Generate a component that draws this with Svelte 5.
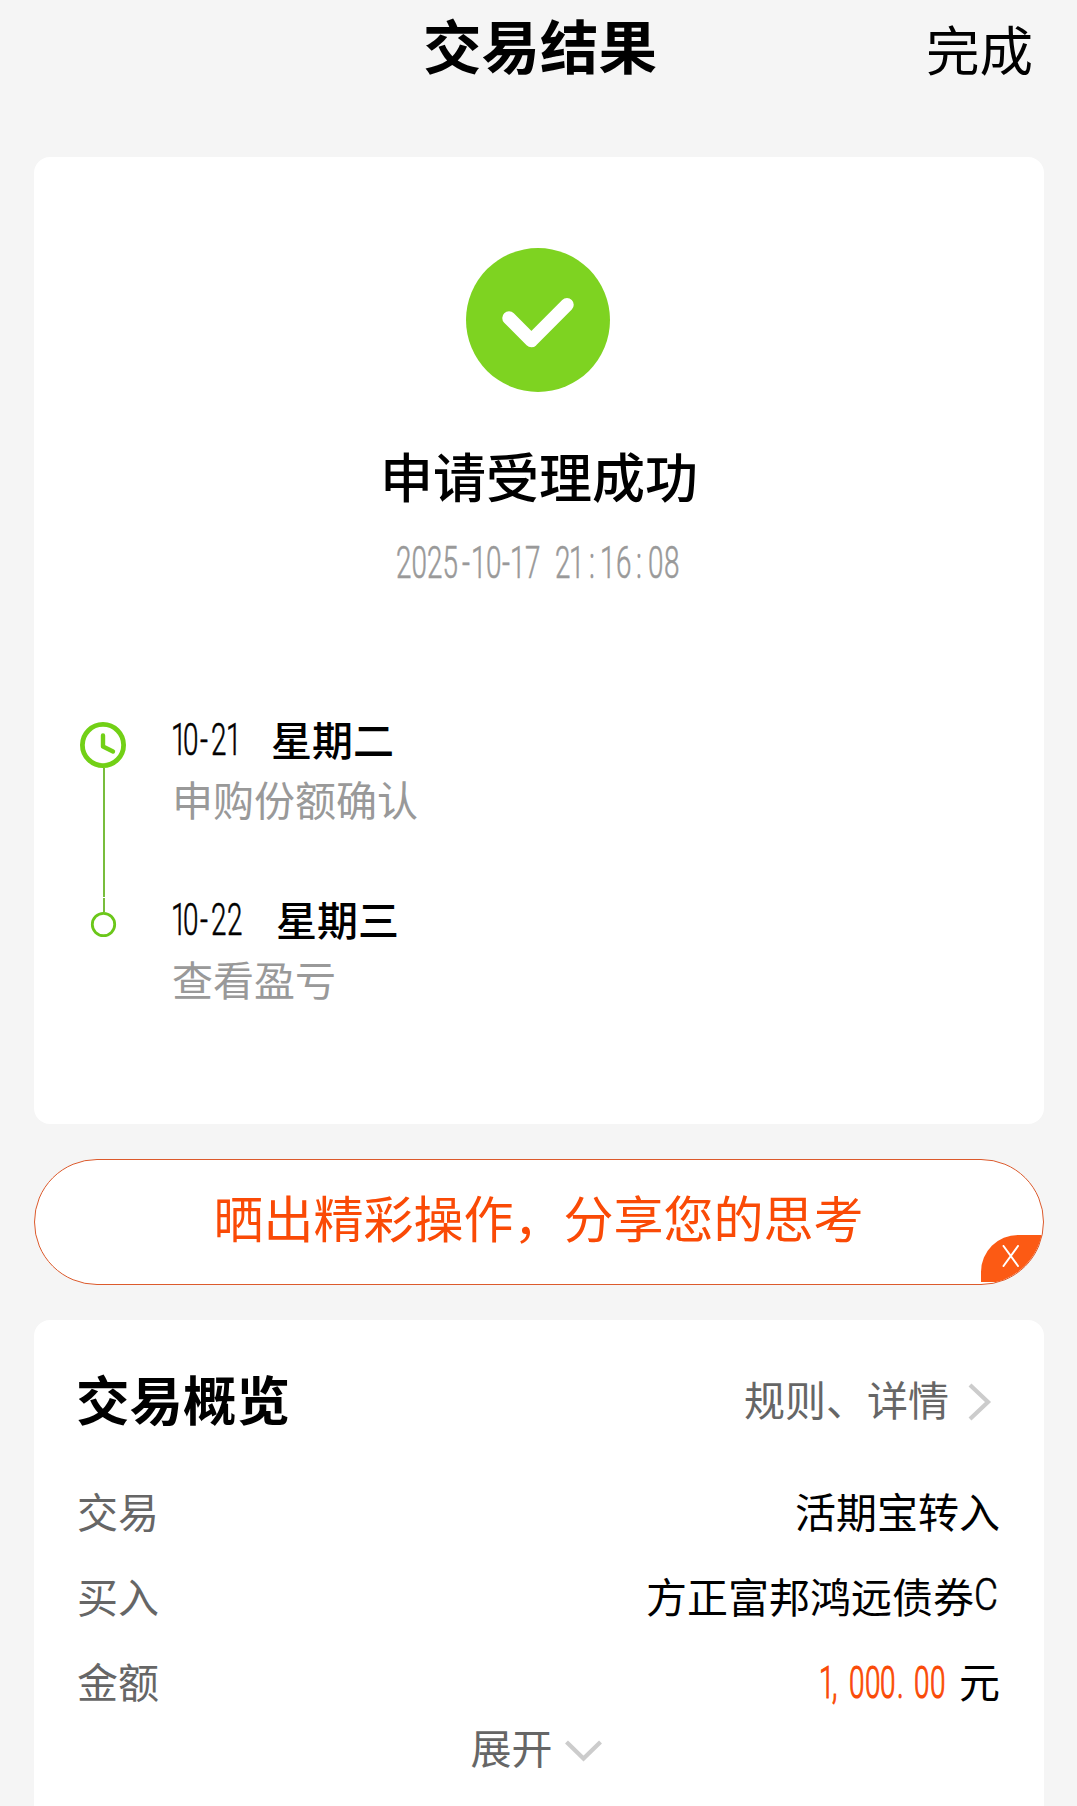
<script>
  // Horizontal squeeze applied to latin glyphs; xs holds the left edge of each glyph in px.
  const SQUEEZE = 0.64;

  const steps = [
    { text: '10-21', xs: [-1, 11, 28, 39, 54], width: 99, day: '星期二', note: '申购份额确认', first: true },
    { text: '10-22', xs: [-1, 11, 28, 39, 55], width: 104, day: '星期三', note: '查看盈亏', first: false }
  ];
  const stamp = {
    text: '2025-10-17 21:16:08',
    xs: [-1, 14.5, 30, 45.5, 65, 74, 89, 105, 113, 128, 144, 158, 172, 192, 203, 219, 239, 251, 267]
  };
  const amount = { text: '1,000.00', xs: [-1, 12, 29, 45, 60, 77, 94, 110] };
</script>

{#snippet narrow(text, xs, width, squeeze = SQUEEZE)}
  <svg class="narrow" {width} height="44" viewBox="0 0 {width} 44">
    <text x={xs.map((x) => x / squeeze).join(' ')} y="36.5" transform="scale({squeeze} 1)">{text}</text>
  </svg>
{/snippet}

<main class="page">
  <header class="bar">
    <span></span>
    <h1>交易结果</h1>
    <span class="done">完成</span>
  </header>

  <section class="card result">
    <svg class="check" width="144" height="144" viewBox="0 0 144 144">
      <circle cx="72" cy="72" r="72" fill="#7ed321" />
      <path d="M43 70 L65.4 92.6 L101 56.8" fill="none" stroke="#fff" stroke-width="13.5" stroke-linecap="round" stroke-linejoin="round" />
    </svg>
    <h2>申请受理成功</h2>
    <div class="stamp">{@render narrow(stamp.text, stamp.xs, 285)}</div>

    <ol class="steps">
      {#each steps as s}
        <li class="step">
          <div class="rail">
            {#if s.first}
              <svg width="48" height="176" viewBox="0 0 48 176">
                <path d="M25 46V175" stroke="#78bd3c" stroke-width="2" />
                <circle cx="24" cy="23" r="20.6" fill="#fff" stroke="#72d016" stroke-width="4.8" />
                <path d="M24 13.5V24.5L34 29.5" fill="none" stroke="#72d016" stroke-width="4.4" stroke-linecap="round" stroke-linejoin="round" />
              </svg>
            {:else}
              <svg width="48" height="40" viewBox="0 0 48 40">
                <path d="M25 0V14" stroke="#78bd3c" stroke-width="2" />
                <circle cx="24.5" cy="26.5" r="11.2" fill="#fff" stroke="#6bc71a" stroke-width="2.8" />
              </svg>
            {/if}
          </div>
          <div class="info" class:later={!s.first}>
            <div class="when">{@render narrow(s.text, s.xs, s.width)}<span>{s.day}</span></div>
            <div class="note">{s.note}</div>
          </div>
        </li>
      {/each}
    </ol>
  </section>

  <section class="share">
    <span>晒出精彩操作，分享您的思考</span>
    <button class="close" aria-label="关闭">
      <svg width="18" height="22" viewBox="0 0 18 22"><path d="M1.5 1L16 21M16 1L1.5 21" stroke="#fff" stroke-width="2" stroke-linecap="round" /></svg>
    </button>
  </section>

  <section class="card overview">
    <div class="head">
      <h3>交易概览</h3>
      <div class="more">
        <span>规则、详情</span>
        <svg width="24" height="38" viewBox="0 0 24 38"><path d="M2 2L20 19L2 36" fill="none" stroke="#ccc" stroke-width="4.2" /></svg>
      </div>
    </div>
    <dl>
      <div class="row"><dt>交易</dt><dd>活期宝转入</dd></div>
      <div class="row"><dt>买入</dt><dd>方正富邦鸿远债券<span class="cls">{@render narrow('C', [0], 25, 0.85)}</span></dd></div>
      <div class="row"><dt>金额</dt><dd><span class="amount">{@render narrow(amount.text, amount.xs, 139)}</span>元</dd></div>
    </dl>
    <div class="expand">
      <span>展开</span>
      <svg width="37" height="22" viewBox="0 0 37 22"><path d="M1.5 2L18.5 18.5L35.5 2" fill="none" stroke="#ccc" stroke-width="4.2" /></svg>
    </div>
  </section>
</main>

<style>
  :global(body) {
    margin: 0;
    background: #f5f5f5;
  }
  .page {
    box-sizing: border-box;
    height: 1806px;
    overflow: hidden;
    padding: 0 33px 0 34px;
    background: #f5f5f5;
    color: #000;
    font-family: 'Noto Sans CJK SC', sans-serif;
    font-size: 41px;
    line-height: 60px;
    display: flex;
    flex-direction: column;
  }
  h1, h2, h3, ol, dl, dd {
    margin: 0;
    padding: 0;
  }
  svg {
    display: block;
    flex: none;
  }
  .bar {
    height: 157px;
    flex: none;
    display: grid;
    grid-template-columns: 1fr auto 1fr;
    align-items: start;
  }
  h1 {
    font-size: 58.5px;
    line-height: 87px;
    font-weight: 700;
    padding-left: 2px;
  }
  .done {
    justify-self: end;
    font-size: 53.5px;
    line-height: 96px;
    padding-right: 11px;
  }
  .card {
    background: #fff;
    border-radius: 16px;
    flex: none;
  }
  .result {
    height: 967px;
    box-sizing: border-box;
    padding-top: 91px;
    display: flex;
    flex-direction: column;
    align-items: center;
  }
  .check {
    margin-right: 2px;
  }
  h2 {
    margin-top: 43px;
    font-size: 53px;
    line-height: 80px;
    font-weight: 500;
  }
  .stamp {
    margin-top: 26px;
    color: #999;
  }
  .narrow {
    overflow: visible;
    font-family: Roboto, sans-serif;
    font-weight: 300;
    font-size: 43.5px;
    fill: currentColor;
    stroke: currentColor;
    stroke-width: 0.6px;
  }
  .steps {
    align-self: stretch;
    margin-top: 137px;
    padding-left: 45px;
    list-style: none;
  }
  .step {
    display: flex;
    gap: 45px;
    height: 176px;
  }
  .info {
    margin-top: -14px;
  }
  .info.later {
    margin-top: -10px;
  }
  .when {
    display: flex;
    align-items: center;
    font-weight: 500;
  }
  .when .narrow {
    margin-top: 4px;
  }
  .note {
    color: #999;
  }
  .share {
    position: relative;
    box-sizing: border-box;
    height: 126px;
    margin: 35px 0;
    flex: none;
    border: 1.5px solid #dc5a2c;
    border-radius: 63px;
    background: #fff;
    overflow: hidden;
    display: flex;
    align-items: center;
    justify-content: center;
    color: #fa4a06;
    font-size: 50px;
  }
  .share span {
    margin-top: -12px;
    margin-right: 1px;
  }
  .close {
    position: absolute;
    right: 0;
    bottom: 2px;
    width: 62px;
    height: 47px;
    padding: 0 2px 6px 0;
    border: 0;
    border-radius: 37px 0 0 0;
    background: #fc5a14;
    display: flex;
    align-items: center;
    justify-content: center;
  }
  .overview {
    height: 520px;
    padding: 38px 44px 0 42px;
  }
  .head {
    display: flex;
    justify-content: space-between;
    height: 80px;
    align-items: center;
  }
  h3 {
    font-size: 53.5px;
    font-weight: 700;
  }
  .more {
    display: flex;
    align-items: center;
    gap: 19px;
    padding-right: 8px;
    color: #666;
  }
  .more svg {
    margin-top: 7px;
  }
  dl {
    margin-top: 29px;
    margin-bottom: 1px;
  }
  .row {
    display: flex;
    justify-content: space-between;
    align-items: center;
    height: 85px;
  }
  dt {
    color: #666;
    padding-left: 1px;
  }
  dd {
    display: flex;
    align-items: center;
  }
  .cls {
    margin-top: 1px;
    margin-right: 1px;
  }
  .amount {
    color: #fa4a06;
    margin-top: 7px;
  }
  .amount .narrow,
  .amount :global(svg) {
    stroke-width: 1.1px;
  }
  .expand {
    display: flex;
    align-items: center;
    justify-content: center;
    gap: 12px;
    color: #666;
    margin-top: -7px;
    padding-right: 4px;
  }
  .expand svg {
    margin-top: 10px;
  }
</style>
